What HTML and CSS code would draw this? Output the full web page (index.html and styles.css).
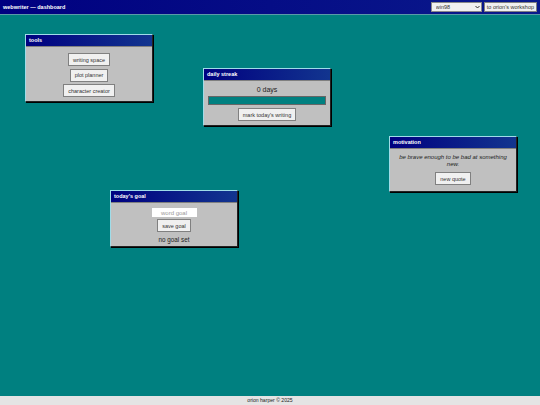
FILE: index.html
```html
<!DOCTYPE html>
<html lang="en">
<head>
<meta charset="utf-8">
<title>webwriter — dashboard</title>
<link rel="stylesheet" href="styles.css">
</head>
<body>
<header class="topbar">
  <span class="brand">webwriter — dashboard</span>
  <div class="controls">
    <div class="select-wrap">
      <select class="theme"><option>win98</option></select>
      <svg class="chevron" viewBox="0 0 6 4" width="5" height="4" aria-hidden="true"><path d="M.6.8 3 3.2 5.4.8" fill="none" stroke="#222" stroke-width="1.1"/></svg>
    </div>
    <button class="btn top">to orion's workshop</button>
  </div>
</header>
<main class="desktop">
  <section class="win tools">
    <h2 class="title">tools</h2>
    <div class="body">
      <button class="btn">writing space</button>
      <button class="btn">plot planner</button>
      <button class="btn">character creator</button>
    </div>
  </section>
  <section class="win streak">
    <h2 class="title">daily streak</h2>
    <div class="body">
      <p class="days">0 days</p>
      <div class="bar"></div>
      <button class="btn">mark today's writing</button>
    </div>
  </section>
  <section class="win motivation">
    <h2 class="title">motivation</h2>
    <div class="body">
      <p class="quote">be brave enough to be bad at something new.</p>
      <button class="btn">new quote</button>
    </div>
  </section>
  <section class="win goal">
    <h2 class="title">today's goal</h2>
    <div class="body">
      <input class="field" placeholder="word goal">
      <button class="btn">save goal</button>
      <p class="status">no goal set</p>
    </div>
  </section>
</main>
<footer class="footer">orion harper © 2025</footer>
</body>
</html>
```
FILE: styles.css
```css
* { box-sizing: border-box; }
html, body { height: 100%; margin: 0; }
body {
  display: flex;
  flex-direction: column;
  height: 405px;
  overflow: hidden;
  background: #008080;
  font-family: "Liberation Sans", Arial, sans-serif;
  font-size: 6px;
  color: #222;
}
.topbar {
  display: flex;
  align-items: center;
  justify-content: space-between;
  height: 15px;
  padding: 0 3px;
  background: linear-gradient(90deg, #000080 0%, #0a1a8c 100%);
  border-bottom: 1px solid #5a9aa8;
}
.brand { color: #fff; font-weight: bold; font-size: 5.5px; }
.controls { display: flex; align-items: center; gap: 2px; }
.select-wrap { position: relative; width: 51px; height: 10px; }
.theme {
  appearance: none;
  display: block;
  width: 100%;
  height: 100%;
  padding: 0 0 0 4px;
  font: 5.5px "Liberation Sans", Arial, sans-serif;
  background: #f0f0f0;
  border: 1px solid #888;
  border-radius: 0;
  color: #333;
}
.chevron { position: absolute; right: 2px; top: 3px; }
.btn {
  display: block;
  padding: 0 4px;
  height: 13px;
  font: 5.5px "Liberation Sans", Arial, sans-serif;
  color: #333;
  background: #f0f0f0;
  border: 1px solid #808080;
  border-radius: 0;
}
.btn.top { height: 10px; padding: 0 2px; }
.desktop { position: relative; flex: 1; }
.win {
  position: absolute;
  width: 128px;
  background: #c0c0c0;
  border: 1px solid;
  border-color: #9fdce8 #222 #222 #9fdce8;
  box-shadow: 1px 1px 0 #000;
}
.tools { left: 25px; top: 19px; height: 68px; }
.streak { left: 203px; top: 53px; height: 58px; }
.motivation { left: 389px; top: 121px; height: 56px; }
.goal { left: 110px; top: 175px; height: 57px; }
.title {
  height: 12px;
  margin: 0;
  padding: 0 3px;
  line-height: 11px;
  font-size: 5.5px;
  font-weight: bold;
  color: #fff;
  background: linear-gradient(90deg, #000080, #12358f);
  border-bottom: 1px solid #808080;
}
.body {
  display: flex;
  flex-direction: column;
  align-items: center;
  padding: 6px 4px 0;
  gap: 3px;
}
.tools .body { gap: 2.5px; }
.days { margin: 0; font-size: 7px; line-height: 9px; }
.bar {
  align-self: stretch;
  height: 9px;
  background: #008080;
  border: 1px solid #666;
}
.streak .body { padding-top: 4px; gap: 2px; }
.streak .btn { margin-top: 1px; }
.quote {
  margin: 0 0 4px;
  font-size: 6px;
  font-style: italic;
  line-height: 7px;
  text-align: center;
}
.motivation .body { padding-top: 5px; gap: 0; }
.field {
  width: 45px;
  height: 9px;
  padding: 0;
  font: 6px "Liberation Sans", Arial, sans-serif;
  text-align: center;
  background: #fff;
  border: 0;
}
.field::placeholder { color: #999; }
.goal .body { padding-top: 5px; gap: 2px; }
.status { margin: 2px 0 0; font-size: 6.3px; line-height: 8px; }
.footer {
  height: 9px;
  line-height: 9px;
  text-align: center;
  font-size: 5.1px;
  background: #e4e4e4;
  color: #222;
}
```
